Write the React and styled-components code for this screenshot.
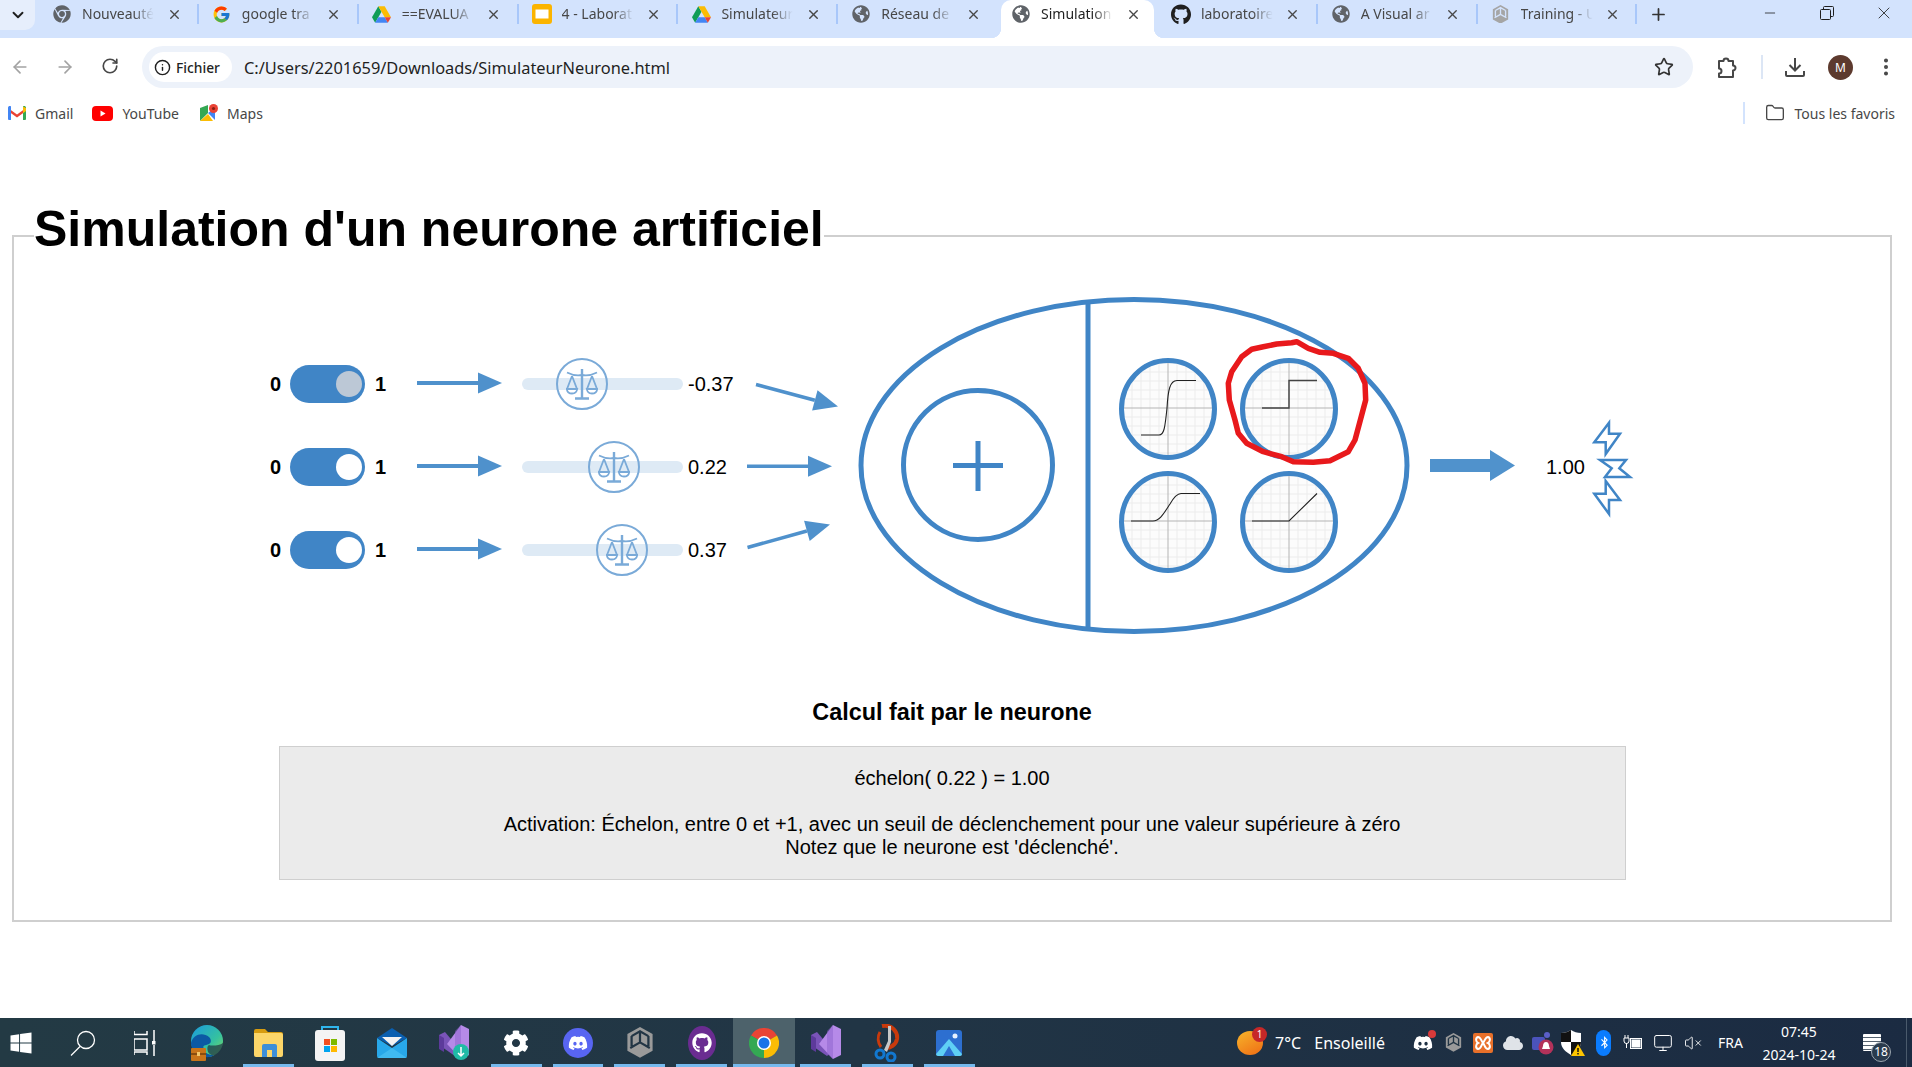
import React from "react";
import styled, { createGlobalStyle } from "styled-components";
import {
  ArrowLeft,
  ArrowRight,
  RotateCw,
  Info,
  Star,
  EllipsisVertical,
  X,
  Plus,
  Minus,
  Folder,
  ChevronDown,
  Monitor,
  VolumeX,
} from "lucide-react";
import {
  FaChrome,
  FaGlobeAmericas,
  FaGithub,
  FaDiscord,
  FaWindows,
  FaCog,
  FaCloud,
  FaBluetoothB,
} from "react-icons/fa";
import { FcGoogle } from "react-icons/fc";

const BLUE = "#4085c6";
const ARROW = "#4f91cc";
const THUMB = "#7aaad8";

const GlobalStyle = createGlobalStyle`
  html, body {
    margin: 0;
    padding: 0;
    background: #fff;
    font-family: "Liberation Sans", Arial, sans-serif;
  }
  * { box-sizing: border-box; }
`;

const Screen = styled.div`
  width: 1912px;
  height: 1067px;
  display: flex;
  flex-direction: column;
  overflow: hidden;
`;

/* ---------- browser chrome ---------- */

const TabStrip = styled.div`
  display: flex;
  height: 38px;
  flex: none;
  background: #d3e3fd;
  overflow: hidden;
  font-family: "Noto Sans", sans-serif;
`;

const TabMenu = styled.div`
  width: 35px;
  height: 30px;
  margin-right: 3px;
  flex: none;
  display: flex;
  align-items: center;
  justify-content: center;
  background: #e6eefc;
  border-radius: 0 0 10px 0;
  color: #1f1f1f;
`;

const Tab = styled.div`
  position: relative;
  isolation: isolate;
  width: 159.85px;
  height: 38px;
  flex: none;
  padding: 4px 0 0 14px;
  display: flex;
  align-items: flex-start;
  color: ${({ $active }) => ($active ? "#1f1f1f" : "#474747")};
  &::before {
    content: "";
    position: absolute;
    z-index: -1;
    top: 0;
    bottom: 0;
    left: 4px;
    right: 3px;
    border-radius: 10px 10px 0 0;
    background: ${({ $active }) => ($active ? "#fff" : "transparent")};
  }
  &::after {
    content: "";
    position: absolute;
    top: 4px;
    right: -1px;
    width: 2px;
    height: 20px;
    background: ${({ $noSep }) => ($noSep ? "transparent" : "#a8c7fa")};
  }
`;

const Flare = styled.span`
  position: absolute;
  z-index: -1;
  bottom: 0;
  width: 10px;
  height: 10px;
  ${({ $side }) => ($side === "left" ? "left: -6px;" : "right: -7px;")}
  background: radial-gradient(
    circle at ${({ $side }) => ($side === "left" ? "0 0" : "100% 0")},
    transparent 10px,
    #fff 10.5px
  );
`;

const Favicon = styled.span`
  width: 20px;
  height: 20px;
  flex: none;
  display: flex;
  align-items: center;
  justify-content: center;
  color: #5f6368;
`;

const TabTitle = styled.span`
  width: 78px;
  margin-left: 10px;
  flex: none;
  font-size: 14px;
  line-height: 20px;
  white-space: nowrap;
  overflow: hidden;
  -webkit-mask-image: linear-gradient(to right, #000 66%, transparent 92%);
  mask-image: linear-gradient(to right, #000 66%, transparent 92%);
`;

const TabClose = styled.span`
  width: 16px;
  height: 20px;
  margin-left: 6px;
  display: flex;
  align-items: center;
  justify-content: center;
  color: #474747;
`;

const NewTab = styled.div`
  width: 44px;
  height: 28px;
  flex: none;
  display: flex;
  align-items: center;
  justify-content: center;
  color: #333;
`;

const WindowControls = styled.div`
  margin-left: auto;
  display: flex;
`;

const WindowButton = styled.div`
  width: 57px;
  height: 26px;
  display: flex;
  align-items: center;
  justify-content: center;
  color: #1f1f1f;
`;

const Toolbar = styled.div`
  height: 58px;
  flex: none;
  display: flex;
  align-items: center;
  background: #fff;
  font-family: "Noto Sans", sans-serif;
`;

const NavGroup = styled.div`
  display: flex;
  margin-left: -3px;
`;

const NavButton = styled.div`
  width: 45px;
  display: flex;
  justify-content: center;
  color: ${({ $dim }) => ($dim ? "#a3a3a3" : "#474747")};
`;

const AddressBar = styled.div`
  width: 1551px;
  height: 42px;
  margin-left: 10px;
  display: flex;
  align-items: center;
  background: #edf2fa;
  border-radius: 21px;
`;

const SecurityPill = styled.div`
  width: 83px;
  height: 30px;
  margin-left: 7px;
  padding-left: 5px;
  display: flex;
  align-items: center;
  gap: 5px;
  background: #fff;
  border-radius: 15px;
  color: #1f1f1f;
  font-size: 13.8px;
  font-weight: 500;
`;

const Url = styled.span`
  margin-left: 12px;
  font-size: 16.4px;
  color: #1f1f1f;
`;

const StarSlot = styled.span`
  margin-left: auto;
  margin-right: 19px;
  display: flex;
  color: #333;
`;

const ToolIcon = styled.span`
  width: ${({ $w }) => $w || 24}px;
  margin-left: ${({ $ml }) => $ml}px;
  display: flex;
  justify-content: center;
  color: #474747;
`;

const ToolDivider = styled.span`
  width: 2px;
  height: 24px;
  margin-left: 21px;
  background: #dce6f5;
`;

const Avatar = styled.span`
  width: 25px;
  height: 25px;
  margin-left: 21px;
  border-radius: 50%;
  display: flex;
  align-items: center;
  justify-content: center;
  background: #5d3a2e;
  color: #fff;
  font-size: 12px;
`;

const BookmarksBar = styled.div`
  height: 36px;
  flex: none;
  padding: 0 17px 2px 8px;
  display: flex;
  align-items: center;
  background: #fff;
  font-family: "Noto Sans", sans-serif;
  font-size: 14px;
  color: #474747;
`;

const Bookmark = styled.span`
  margin-right: ${({ $mr }) => $mr || 0}px;
  display: flex;
  align-items: center;
  gap: 9px;
`;

const AllBookmarks = styled.span`
  margin-left: auto;
  display: flex;
  align-items: center;
  gap: 10px;
  &::before {
    content: "";
    width: 2px;
    height: 22px;
    margin-right: 10px;
    background: #d3e3fd;
  }
`;

/* ---------- page content ---------- */

const Main = styled.main`
  flex: 1;
  padding: 69px 20px 0 12px;
  background: #fff;
`;

const Panel = styled.fieldset`
  margin: 0;
  padding: 0 0 40px;
  border: 2px solid #cfcfcf;
`;

const PanelTitle = styled.legend`
  margin-left: 20px;
  padding: 0 0 14px;
  font-size: 50px;
  line-height: 56px;
  font-weight: 700;
  color: #000;
`;

const Diagram = styled.div`
  margin-top: 22px;
  padding-left: 256px;
  display: flex;
  align-items: flex-start;
`;

const Inputs = styled.div`
  margin-top: 49.5px;
  display: flex;
  flex-direction: column;
`;

const InputRow = styled.div`
  height: 83px;
  display: flex;
  align-items: center;
`;

const Digit = styled.span`
  width: 11px;
  font-size: 20px;
  font-weight: 700;
  margin-left: ${({ $ml }) => $ml || 0}px;
`;

const Toggle = styled.div`
  width: 75px;
  height: 38px;
  margin-left: 9px;
  padding-right: 3px;
  display: flex;
  align-items: center;
  justify-content: flex-end;
  background: ${BLUE};
  border-radius: 19px;
`;

const Knob = styled.span`
  width: 26px;
  height: 26px;
  border-radius: 50%;
  background: ${({ $dim }) => ($dim ? "#bcc8d6" : "#fff")};
`;

const RowArrow = styled.svg`
  flex: none;
  margin-left: ${({ $ml }) => $ml || 0}px;
`;

const SliderTrack = styled.div`
  position: relative;
  width: 161px;
  height: 12px;
  margin-left: 20px;
  flex: none;
  background: #deeaf5;
  border-radius: 6px;
`;

const SliderThumb = styled.div`
  position: absolute;
  top: 50%;
  width: 52px;
  height: 52px;
  transform: translate(-50%, -50%);
  display: flex;
  align-items: center;
  justify-content: center;
  border: 2.5px solid ${THUMB};
  border-radius: 50%;
`;

const WeightValue = styled.span`
  width: 52px;
  margin-left: 5px;
  flex: none;
  font-size: 20px;
  color: #000;
`;

const NeuronDrawing = styled.svg`
  flex: none;
  margin-left: 10px;
`;

const Output = styled.div`
  height: 344px;
  margin-left: 17px;
  display: flex;
  align-items: center;
`;

const OutputValue = styled.span`
  margin-left: 31px;
  margin-top: 5px;
  font-size: 20px;
  color: #000;
`;

const Bolts = styled.svg`
  margin-left: 5px;
  margin-top: 6px;
  flex: none;
`;

const CalcTitle = styled.h3`
  margin: 61px 0 0;
  font-size: 23.4px;
  line-height: 28px;
  font-weight: 700;
  text-align: center;
  color: #000;
`;

const CalcBox = styled.div`
  width: 1347px;
  margin: 20px auto 0;
  padding: 20px 10px;
  background: #ebebeb;
  border: 1px solid #cfcfcf;
  font-size: 20px;
  line-height: 23px;
  text-align: center;
  color: #000;
`;

const CalcFormula = styled.div`
  margin-bottom: 23px;
`;

/* ---------- taskbar ---------- */

const Taskbar = styled.footer`
  position: relative;
  height: 49px;
  flex: none;
  display: flex;
  justify-content: space-between;
  background: linear-gradient(to right, #233a44, #213545 45%, #1b2b42);
  color: #fff;
  font-family: "Noto Sans", sans-serif;
`;

const TaskApps = styled.div`
  display: flex;
  margin-left: -10px;
`;

const TaskApp = styled.div`
  position: relative;
  width: 61.9px;
  height: 49px;
  display: flex;
  align-items: center;
  justify-content: center;
  background: ${({ $active }) => ($active ? "#4d626b" : "transparent")};
  &::after {
    content: "";
    position: absolute;
    bottom: 0;
    height: 3px;
    left: ${({ $active }) => ($active ? 0 : 5.5)}px;
    right: ${({ $active }) => ($active ? 0 : 5.5)}px;
    background: ${({ $running }) => ($running ? "#76b9ed" : "transparent")};
  }
`;

const Tray = styled.div`
  display: flex;
  align-items: center;
`;

const Weather = styled.div`
  position: relative;
  width: 26px;
  height: 24px;
  border-radius: 50%;
  background: linear-gradient(150deg, #f7b52b, #ef6c14);
`;

const WeatherBadge = styled.span`
  position: absolute;
  top: -4px;
  right: -4px;
  width: 15px;
  height: 15px;
  border-radius: 50%;
  background: #c62828;
  font-size: 10px;
  line-height: 15px;
  text-align: center;
`;

const WeatherText = styled.span`
  margin-left: 12px;
  margin-right: 23px;
  font-size: 16px;
  word-spacing: 9px;
`;

const TrayIcon = styled.span`
  position: relative;
  width: 30px;
  display: flex;
  justify-content: center;
`;

const TrayDot = styled.span`
  position: absolute;
  top: -3px;
  right: 2px;
  width: 8px;
  height: 8px;
  border-radius: 50%;
  background: #d93a3a;
`;

const Lang = styled.span`
  width: 26px;
  margin-left: 10px;
  font-size: 14px;
`;

const Clock = styled.div`
  width: 90px;
  margin-left: 10px;
  font-size: 14px;
  line-height: 23px;
  text-align: center;
`;

const Notifications = styled.div`
  position: relative;
  width: 18px;
  height: 17px;
  margin-left: 19px;
  margin-right: 31px;
  background: repeating-linear-gradient(
    to bottom,
    #fff 0,
    #fff 3px,
    #55626f 3px,
    #55626f 4px
  );
  border-radius: 1px;
`;

const NotificationCount = styled.span`
  position: absolute;
  left: 8px;
  top: 8px;
  width: 20px;
  height: 20px;
  border-radius: 50%;
  border: 1px solid #9aa5ae;
  background: #2a3b4d;
  font-size: 12px;
  line-height: 18px;
  text-align: center;
`;

const EdgeLine = styled.span`
  position: absolute;
  right: 5px;
  top: 0;
  bottom: 0;
  width: 1px;
  background: #4a5a6c;
`;

/* ---------- drawn icons ---------- */

const DriveIcon = () => (
  <svg width="19" height="17" viewBox="0 0 24 21">
    <path fill="#0f9d58" d="M8 0 0 14l4 7 8-14z" />
    <path fill="#fbbc04" d="M8 0h8l8 14h-8z" />
    <path fill="#4285f4" d="M8 14h8l4 7H4z" />
    <path fill="#ea4335" d="M16 14h8l-4 7z" />
  </svg>
);

const SlidesIcon = () => (
  <svg width="20" height="20" viewBox="0 0 20 20">
    <rect width="20" height="20" rx="3" fill="#fbb400" />
    <rect x="3.5" y="5.5" width="13" height="9" fill="#fff" />
  </svg>
);

const GmailIcon = () => (
  <svg width="18" height="14" viewBox="0 0 18 14">
    <path fill="#ea4335" d="M0 2 9 8.500 18 2v3L9 11.500 0 5z" />
    <path fill="#4285f4" d="M0 2c0-2 2-2.500 3-1.500V14H1a1 1 0 0 1-1-1z" />
    <path fill="#34a853" d="M18 2c0-2-2-2.500-3-1.500V14h2a1 1 0 0 0 1-1z" />
    <path fill="#fbbc04" d="M15 .5 18 2v3l-3 2.200z" />
  </svg>
);

const YoutubeIcon = () => (
  <svg width="21" height="15" viewBox="0 0 21 15">
    <rect width="21" height="15" rx="4" fill="#f00" />
    <path fill="#fff" d="m8.500 4.500 5 3-5 3z" />
  </svg>
);

const MapsIcon = () => (
  <svg width="18" height="18" viewBox="0 0 18 18">
    <path fill="#34a853" d="M0 4 8 1v8l-8 8z" />
    <path fill="#fbbc04" d="M0 17h13L8 10z" />
    <path fill="#4285f4" d="M8 9l7 7V8l-3-2z" />
    <circle cx="13.500" cy="4.500" r="4.500" fill="#ea4335" />
    <circle cx="13.500" cy="4.500" r="1.600" fill="#8a1f14" />
  </svg>
);

const RestoreIcon = () => (
  <svg width="14" height="14" viewBox="0 0 14 14" fill="none" stroke="currentColor">
    <rect x="0.5" y="3.500" width="10" height="10" rx="1" />
    <path d="M3.500 3V1.500a1 1 0 0 1 1-1h8a1 1 0 0 1 1 1v8a1 1 0 0 1-1 1H11" />
  </svg>
);

const ExtensionIcon = () => (
  <svg width="22" height="24" viewBox="0 0 22 24" fill="none" stroke="currentColor" strokeWidth="2" strokeLinejoin="round">
    <path d="M2 6h4.500a2.500 2.500 0 0 1 5 0H16v4.500a2.500 2.500 0 0 1 0 5V22H2v-3.500a2.500 2.500 0 0 0 0-5z" />
  </svg>
);

const DownloadIcon = () => (
  <svg width="22" height="22" viewBox="0 0 22 22" fill="none" stroke="currentColor" strokeWidth="2">
    <path d="M11 2v12M5.500 9l5.500 5.500L16.500 9M2 15v4a1 1 0 0 0 1 1h16a1 1 0 0 0 1-1v-4" />
  </svg>
);

// grey cube of the Unity logo
const UnityCube = ({ size, color = "#9a9a9a", line = "#223545" }) => (
  <svg width={size} height={size * 1.100} viewBox="0 0 20 22">
    <path fill={color} d="M10 0 19 5v12l-9 5-9-5V5z" />
    <path fill="none" stroke={line} strokeWidth="1.600" d="M10 11V3M10 11l-7 4M10 11l7 4M4 6.500 10 3l6 3.500M4 6.500v7M16 6.500v7" />
  </svg>
);

const SearchIcon = () => (
  <svg width="26" height="26" viewBox="0 0 26 26" fill="none" stroke="#fff" strokeWidth="1.300">
    <circle cx="16" cy="10" r="8.500" />
    <path d="M10 16.500 1 25.500" />
  </svg>
);

const TaskViewIcon = () => (
  <svg width="22" height="26" viewBox="0 0 22 26" fill="none" stroke="#fff" strokeWidth="1.500">
    <path d="M0 4.500h13V1M0 1v3.500M0 9h13v11H0zM0 25v-3h13v3M20 0v11M20 15v11" />
    <rect x="18" y="11" width="3.500" height="3.500" fill="#fff" stroke="none" />
  </svg>
);

const EdgeIcon = () => (
  <svg width="32" height="36" viewBox="0 0 32 36">
    <defs>
      <linearGradient id="edgeTop" x1="0" y1="0" x2="1" y2="1">
        <stop offset="0" stopColor="#1a9be0" />
        <stop offset="0.6" stopColor="#35c1a0" />
        <stop offset="1" stopColor="#7fdc5c" />
      </linearGradient>
    </defs>
    <circle cx="16" cy="16" r="16" fill="url(#edgeTop)" />
    <path fill="#0c59a4" d="M0 18c2-9 12-11 18-6 3 3 2 6 0 7-4 2-7 0-5 6 1 3 5 5 10 5-5 4-13 2-18-2-4-3-5-7-5-10z" />
    <path fill="#223a45" d="M18 20c2 1 10 1 14-2 0 4-2 9-6 12-4 1-7 0-9-3-1-3-1-6 1-7z" opacity="0.75" />
    <rect x="0" y="23" width="15" height="13" rx="1" fill="#c9741a" />
    <rect x="0" y="28" width="15" height="2" fill="#8a4d10" />
    <rect x="6" y="27" width="3" height="4" fill="#f4c66a" />
  </svg>
);

const ExplorerIcon = () => (
  <svg width="29" height="28" viewBox="0 0 29 28">
    <path fill="#d79c10" d="M0 2a2 2 0 0 1 2-2h9l3 3h13a2 2 0 0 1 2 2v5H0z" />
    <path fill="#fcd669" d="M0 4h27a2 2 0 0 1 2 2v20a2 2 0 0 1-2 2H2a2 2 0 0 1-2-2z" />
    <path fill="#3d8fd9" d="M8 28V17a2 2 0 0 1 2-2h11a2 2 0 0 1 2 2v11h-5v-7h-5v7z" />
    <rect x="13" y="21" width="5" height="7" fill="#fcd669" />
  </svg>
);

const StoreIcon = () => (
  <svg width="30" height="36" viewBox="0 0 30 36">
    <path fill="none" stroke="#2fb6ee" strokeWidth="2" d="M7 8V2h16v6" />
    <rect y="5" width="30" height="31" rx="3" fill="#f4f4f4" />
    <rect x="9" y="14" width="6" height="6" fill="#f25022" />
    <rect x="16" y="14" width="6" height="6" fill="#7fba00" />
    <rect x="9" y="21" width="6" height="6" fill="#00a4ef" />
    <rect x="16" y="21" width="6" height="6" fill="#ffb900" />
  </svg>
);

const MailIcon = () => (
  <svg width="30" height="30" viewBox="0 0 30 30">
    <path fill="#0a5fb0" d="M0 10 15 0l15 10-15 8z" />
    <path fill="#f2f2f2" d="M5 9h20l-10 9z" />
    <path fill="#28a8ea" d="M0 10l15 10 15-10v18a2 2 0 0 1-2 2H2a2 2 0 0 1-2-2z" />
    <path fill="#50c7f5" d="M0 30 15 20l15 10z" opacity="0.6" />
  </svg>
);

const VsIcon = ({ badge }) => (
  <svg width="30" height="36" viewBox="0 0 30 36">
    <path fill="#7a54b8" d="M0 10 6 7l16 19-6 5-16-11z" />
    <path fill="#5d3a9b" d="M0 10v14l5 3V13z" />
    <path fill="#b68ae8" d="M22 0l8 4v26l-8 4-14-15z" />
    <path fill="#8b62cc" d="M22 0v34l-6-5V6z" opacity="0.5" />
    {badge && <circle cx="22" cy="27" r="8" fill="#1fbba6" />}
    {badge && <path d="M22 22v9M19 28l3 3 3-3" fill="none" stroke="#fff" strokeWidth="1.500" />}
  </svg>
);

const ChromeIcon = () => (
  <svg width="30" height="30" viewBox="0 0 24 24">
    <path fill="#ea4335" d="M12 12 1.600 6A12 12 0 0 1 22.400 6z" />
    <path fill="#fbbc04" d="M12 12 22.400 6A12 12 0 0 1 12 24z" />
    <path fill="#34a853" d="M12 12v12A12 12 0 0 1 1.600 6z" />
    <circle cx="12" cy="12" r="5.600" fill="#fff" />
    <circle cx="12" cy="12" r="4.400" fill="#1a73e8" />
  </svg>
);

const SnipIcon = () => (
  <svg width="26" height="38" viewBox="0 0 26 38">
    <path fill="none" stroke="#c93a0c" strokeWidth="4" d="M8 2c10-2 16 6 15 13-1 6-7 9-11 9" />
    <path fill="none" stroke="#c93a0c" strokeWidth="3" d="M6 8c-3 5-2 11 1 15" />
    <path fill="#c8c8c8" d="M14 2h3v16l-4 10-3-2 4-9z" />
    <circle cx="6" cy="30" r="4" fill="none" stroke="#1278d0" strokeWidth="3" />
    <circle cx="17" cy="33" r="4" fill="none" stroke="#1278d0" strokeWidth="3" />
  </svg>
);

const PhotosIcon = () => (
  <svg width="26" height="26" viewBox="0 0 26 26">
    <rect width="26" height="26" rx="3" fill="#2d6fd0" />
    <circle cx="19" cy="6" r="2.500" fill="#e8f2ff" />
    <path fill="#5fd0f5" d="M0 24 13 9l13 15a2 2 0 0 1-2 2H2a2 2 0 0 1-2-2z" />
    <path fill="#2d6fd0" d="M7 26 13 16l6 10z" />
  </svg>
);

const DiscordBadge = () => (
  <svg width="30" height="30" viewBox="0 0 30 30">
    <circle cx="15" cy="15" r="15" fill="#5865f2" />
    <FaDiscord x="5" y="5" size={20} color="#fff" />
  </svg>
);

const GithubBadge = () => (
  <svg width="28" height="34" viewBox="0 0 28 34">
    <ellipse cx="14" cy="17" rx="14" ry="17" fill="#6a2c91" />
    <FaGithub x="4" y="7" size={20} color="#fff" />
  </svg>
);

const XamppIcon = () => (
  <svg width="20" height="20" viewBox="0 0 20 20" fill="none">
    <rect width="20" height="20" rx="2" fill="#e8702a" />
    <path stroke="#fff" strokeWidth="2" d="M5 4c3 0 3 4 5 6-2 2-2 6-5 6-3-1-2-5 0-6-2-1-3-5 0-6zM15 4c-3 0-3 4-5 6 2 2 2 6 5 6 3-1 2-5 0-6 2-1 3-5 0-6z" />
  </svg>
);

const TeamsIcon = () => (
  <svg width="22" height="24" viewBox="0 0 22 24">
    <circle cx="15" cy="4" r="3" fill="#5b5fc7" />
    <rect y="6" width="13" height="13" rx="2" fill="#4b53bc" />
    <circle cx="14" cy="16" r="7.500" fill="#b3325a" />
    <path fill="#fff" d="M14 11c-2 0-3 2-3 4l-1 3h8l-1-3c0-2-1-4-3-4z" />
  </svg>
);

const ShieldIcon = () => (
  <svg width="24" height="26" viewBox="0 0 24 26">
    <path fill="#fff" d="M10 0c3 2 6 3 10 3v9c0 6-5 10-10 13C5 22 0 18 0 12V3c4 0 7-1 10-3z" />
    <path fill="#111" d="M10 0v12H0V3c4 0 7-1 10-3zM10 12h10c0 6-5 10-10 13z" />
    <path fill="#fdc500" d="m17 14 7 12H10z" />
    <path stroke="#111" strokeWidth="1.500" d="M17 18v4M17 23v1.500" />
  </svg>
);

const BluetoothPill = () => (
  <svg width="15" height="26" viewBox="0 0 15 26">
    <rect width="15" height="26" rx="7.500" fill="#0a7cff" />
    <FaBluetoothB x="2" y="6" size={13} color="#fff" />
  </svg>
);

const BatteryIcon = () => (
  <svg width="20" height="16" viewBox="0 0 20 16" fill="none" stroke="#fff">
    <path d="M2 0v3M5 0v3M1 3h5v3a2.500 2.500 0 0 1-5 0zM3.500 8v5" />
    <rect x="7.500" y="3.500" width="11" height="10" />
    <rect x="9" y="5" width="8" height="7" fill="#fff" />
  </svg>
);

/* ---------- diagram parts ---------- */

const ScalesGlyph = () => (
  <svg width="32" height="32" viewBox="0 0 32 32" fill="none" stroke={THUMB} strokeWidth="1.800">
    <path strokeWidth="2.400" d="M16 1v29M9 30.500h14" />
    <path d="M1 4.500Q9 8.500 16 7q7 1.500 15-2.500" />
    <path d="M6 8 1 21M6 8l5 13M26 8l-5 13M26 8l5 13" />
    <path d="M.8 21h10.400q-.6 4.500-5.200 4.500T.8 21zM20.800 21h10.400q-.6 4.500-5.200 4.500t-5.200-4.500z" />
  </svg>
);

// line with a triangular head, in the coordinates of the surrounding svg
const ArrowShape = ({ x1, y1, x2, y2, thick = 3.5, head = 24, half = 10.5, color = ARROW }) => {
  const a = Math.atan2(y2 - y1, x2 - x1);
  const bx = x2 - head * Math.cos(a);
  const by = y2 - head * Math.sin(a);
  const nx = -Math.sin(a) * half;
  const ny = Math.cos(a) * half;
  return (
    <g>
      <line x1={x1} y1={y1} x2={bx} y2={by} stroke={color} strokeWidth={thick} />
      <polygon points={`${x2},${y2} ${bx + nx},${by + ny} ${bx - nx},${by - ny}`} fill={color} />
    </g>
  );
};

const gridLines = [-36, -27, -18, -9, 9, 18, 27, 36];

const ActivationPlot = ({ id, cx, cy, curve, bold }) => (
  <g>
    <clipPath id={id}>
      <ellipse cx={cx} cy={cy} rx="46.500" ry="48.500" />
    </clipPath>
    <g clipPath={`url(#${id})`}>
      <g transform={`translate(${cx} ${cy - 1})`}>
        <rect x="-50" y="-52" width="100" height="104" fill="#fcfcfc" />
        {gridLines.map((g) => (
          <line key={`v${g}`} x1={g} x2={g} y1="-52" y2="52" stroke="#ececec" />
        ))}
        {[...gridLines, -45, 45].map((g) => (
          <line key={`h${g}`} y1={g} y2={g} x1="-50" x2="50" stroke="#ececec" />
        ))}
        <line x1="-50" x2="50" y1="0" y2="0" stroke="#b4b4b4" />
        <line x1="0" x2="0" y1="-52" y2="52" stroke="#b4b4b4" />
        <path d={curve} fill="none" stroke={bold ? "#444" : "#222"} strokeWidth={bold ? 1.400 : 1.100} />
      </g>
    </g>
    <ellipse cx={cx} cy={cy} rx="46.500" ry="48.500" fill="none" stroke={BLUE} strokeWidth="5" />
  </g>
);

const NeuronBody = () => (
  <NeuronDrawing width="558" height="344" viewBox="855 293 558 344">
    <ellipse cx="1134" cy="465.500" rx="273" ry="166" fill="none" stroke={BLUE} strokeWidth="5" />
    <line x1="1088" x2="1088" y1="303" y2="630" stroke={BLUE} strokeWidth="5" />
    <ellipse cx="978" cy="465" rx="74.500" ry="74.500" fill="none" stroke={BLUE} strokeWidth="5" />
    <path d="M953 465.500h50M978 441v50" stroke={BLUE} strokeWidth="5" />
    <ActivationPlot id="plotA" cx={1168} cy={409} curve="M-27 27H-9C-4 27-3 20-1 0 0-18 2-27.500 9-27.500H28" />
    <ActivationPlot id="plotB" cx={1289} cy={409} bold curve="M-27 0H0V-27.500H28" />
    <ActivationPlot id="plotC" cx={1168} cy={522} curve="M-37 0H-15C-8 0-4-8 2-17 6-24 9-27.500 13-27.500H32" />
    <ActivationPlot id="plotD" cx={1289} cy={522} curve="M-37 0H0L28-27.500" />
    <path
      fill="none"
      stroke="#e8191c"
      strokeWidth="5.500"
      strokeLinejoin="round"
      d="M1291.700 342.700 1276.700 344 1263.300 346.700 1251.700 349.300 1241.700 356.700 1231.700 371.700 1228.300 383.300 1229.300 400 1235 420 1238.300 433.300 1246.700 443.300 1263.300 451.700 1281.700 456.700 1293.300 461.700 1313.300 462.300 1330 460.700 1348.300 451.700 1355 440 1361.700 415 1365.700 400 1365 383.300 1358.300 368.300 1348.300 358.300 1333.300 353.300 1320 352.300 1308.300 348.300 1296.700 341.700Z"
    />
  </NeuronDrawing>
);

const inputs = [
  { value: -0.37, dim: true, out: { x1: 16, y1: 41.5, x2: 98, y2: 63.5 } },
  { value: 0.22, out: { x1: 7, y1: 40.2, x2: 92, y2: 40.2 } },
  { value: 0.37, out: { x1: 7.5, y1: 38.5, x2: 90, y2: 15.5 } },
];

const tabs = [
  { title: "Nouveauté", icon: <FaChrome size={18} /> },
  { title: "google tra", icon: <FcGoogle size={19} /> },
  { title: "==EVALUA", icon: <DriveIcon /> },
  { title: "4 - Laborat", icon: <SlidesIcon /> },
  { title: "Simulateur", icon: <DriveIcon /> },
  { title: "Réseau de", icon: <FaGlobeAmericas size={18} />, noSep: true },
  { title: "Simulation", icon: <FaGlobeAmericas size={18} />, active: true, noSep: true },
  { title: "laboratoire", icon: <FaGithub size={21} color="#1f1f1f" /> },
  { title: "A Visual ar", icon: <FaGlobeAmericas size={18} /> },
  { title: "Training - U", icon: <UnityCube size={17} color="#a5a5a5" line="#d3e3fd" /> },
];

const apps = [
  { icon: <FaWindows size={24} color="#fff" /> },
  { icon: <SearchIcon /> },
  { icon: <TaskViewIcon /> },
  { icon: <EdgeIcon /> },
  { icon: <ExplorerIcon />, running: true },
  { icon: <StoreIcon /> },
  { icon: <MailIcon /> },
  { icon: <VsIcon badge /> },
  { icon: <FaCog size={26} color="#fff" />, running: true },
  { icon: <DiscordBadge />, running: true },
  { icon: <UnityCube size={28} />, running: true },
  { icon: <GithubBadge />, running: true },
  { icon: <ChromeIcon />, running: true, active: true },
  { icon: <VsIcon />, running: true },
  { icon: <SnipIcon />, running: true },
  { icon: <PhotosIcon />, running: true },
];

const App = () => (
  <Screen>
    <GlobalStyle />
    <TabStrip>
      <TabMenu>
        <ChevronDown size={18} strokeWidth={2.500} />
      </TabMenu>
      {tabs.map((tab) => (
        <Tab key={tab.title} $active={tab.active} $noSep={tab.noSep}>
          {tab.active && <Flare $side="left" />}
          {tab.active && <Flare $side="right" />}
          <Favicon>{tab.icon}</Favicon>
          <TabTitle>{tab.title}</TabTitle>
          <TabClose>
            <X size={15} strokeWidth={2.200} />
          </TabClose>
        </Tab>
      ))}
      <NewTab>
        <Plus size={19} strokeWidth={2.200} />
      </NewTab>
      <WindowControls>
        <WindowButton>
          <Minus size={16} strokeWidth={1.200} />
        </WindowButton>
        <WindowButton>
          <RestoreIcon />
        </WindowButton>
        <WindowButton>
          <X size={20} strokeWidth={1} />
        </WindowButton>
      </WindowControls>
    </TabStrip>

    <Toolbar>
      <NavGroup>
        <NavButton $dim>
          <ArrowLeft size={20} strokeWidth={2} />
        </NavButton>
        <NavButton $dim>
          <ArrowRight size={20} strokeWidth={2} />
        </NavButton>
        <NavButton>
          <RotateCw size={18} strokeWidth={2.200} />
        </NavButton>
      </NavGroup>
      <AddressBar>
        <SecurityPill>
          <Info size={17} strokeWidth={2} />
          Fichier
        </SecurityPill>
        <Url>C:/Users/2201659/Downloads/SimulateurNeurone.html</Url>
        <StarSlot>
          <Star size={20} strokeWidth={2} />
        </StarSlot>
      </AddressBar>
      <ToolIcon $ml={23}>
        <ExtensionIcon />
      </ToolIcon>
      <ToolDivider />
      <ToolIcon $ml={20}>
        <DownloadIcon />
      </ToolIcon>
      <Avatar>M</Avatar>
      <ToolIcon $ml={21}>
        <EllipsisVertical size={22} strokeWidth={2.400} />
      </ToolIcon>
    </Toolbar>

    <BookmarksBar>
      <Bookmark $mr={19}>
        <GmailIcon />
        Gmail
      </Bookmark>
      <Bookmark $mr={21}>
        <YoutubeIcon />
        YouTube
      </Bookmark>
      <Bookmark>
        <MapsIcon />
        Maps
      </Bookmark>
      <AllBookmarks>
        <Folder size={20} strokeWidth={1.600} />
        Tous les favoris
      </AllBookmarks>
    </BookmarksBar>

    <Main>
      <Panel>
        <PanelTitle>Simulation d'un neurone artificiel</PanelTitle>
        <Diagram>
          <Inputs>
            {inputs.map((input) => (
              <InputRow key={input.value}>
                <Digit>0</Digit>
                <Toggle>
                  <Knob $dim={input.dim} />
                </Toggle>
                <Digit $ml={10}>1</Digit>
                <RowArrow width="85" height="24" viewBox="0 0 85 24" $ml={31}>
                  <ArrowShape x1={0} y1={11} x2={85} y2={11} thick={4} />
                </RowArrow>
                <SliderTrack>
                  <SliderThumb style={{ left: 80 + 54 * input.value }}>
                    <ScalesGlyph />
                  </SliderThumb>
                </SliderTrack>
                <WeightValue>{input.value.toFixed(2)}</WeightValue>
                <RowArrow width="105" height="83" viewBox="0 0 105 83">
                  <ArrowShape {...input.out} />
                </RowArrow>
              </InputRow>
            ))}
          </Inputs>
          <NeuronBody />
          <Output>
            <svg width="85" height="31" viewBox="0 0 85 31">
              <ArrowShape x1={0} y1={15.5} x2={85} y2={15.5} thick={13} head={25} half={15.5} color="#5092cc" />
            </svg>
            <OutputValue>1.00</OutputValue>
            <Bolts width="44" height="100" viewBox="1590 418 44 100">
              <g fill="none" stroke={BLUE} strokeWidth="2.500" strokeLinejoin="miter">
                <path d="M1609 422.700 1594.300 442.300H1605.700V454L1620 433.700H1609Z" />
                <path d="M1600 460H1626L1619.300 468.300 1630 477H1605L1611.700 468.300Z" />
                <path d="M1605.700 481 1620 500H1609V514L1594.300 493.700H1605.700Z" />
              </g>
            </Bolts>
          </Output>
        </Diagram>
        <CalcTitle>Calcul fait par le neurone</CalcTitle>
        <CalcBox>
          <CalcFormula>échelon( 0.22 ) = 1.00</CalcFormula>
          <div>Activation: Échelon, entre 0 et +1, avec un seuil de déclenchement pour une valeur supérieure à zéro</div>
          <div>Notez que le neurone est 'déclenché'.</div>
        </CalcBox>
      </Panel>
    </Main>

    <Taskbar>
      <TaskApps>
        {apps.map((app, i) => (
          <TaskApp key={i} $running={app.running} $active={app.active}>
            {app.icon}
          </TaskApp>
        ))}
      </TaskApps>
      <Tray>
        <Weather>
          <WeatherBadge>1</WeatherBadge>
        </Weather>
        <WeatherText>7°C Ensoleillé</WeatherText>
        <TrayIcon>
          <FaDiscord size={20} color="#fff" />
          <TrayDot />
        </TrayIcon>
        <TrayIcon>
          <UnityCube size={17} />
        </TrayIcon>
        <TrayIcon>
          <XamppIcon />
        </TrayIcon>
        <TrayIcon>
          <FaCloud size={20} color="#dfe3e8" />
        </TrayIcon>
        <TrayIcon>
          <TeamsIcon />
        </TrayIcon>
        <TrayIcon>
          <ShieldIcon />
        </TrayIcon>
        <TrayIcon>
          <BluetoothPill />
        </TrayIcon>
        <TrayIcon>
          <BatteryIcon />
        </TrayIcon>
        <TrayIcon>
          <Monitor size={20} color="#fff" strokeWidth={1.200} />
        </TrayIcon>
        <TrayIcon>
          <VolumeX size={18} color="#fff" strokeWidth={1.200} />
        </TrayIcon>
        <Lang>FRA</Lang>
        <Clock>
          <div>07:45</div>
          <div>2024-10-24</div>
        </Clock>
        <Notifications>
          <NotificationCount>18</NotificationCount>
        </Notifications>
      </Tray>
      <EdgeLine />
    </Taskbar>
  </Screen>
);

export default App;
